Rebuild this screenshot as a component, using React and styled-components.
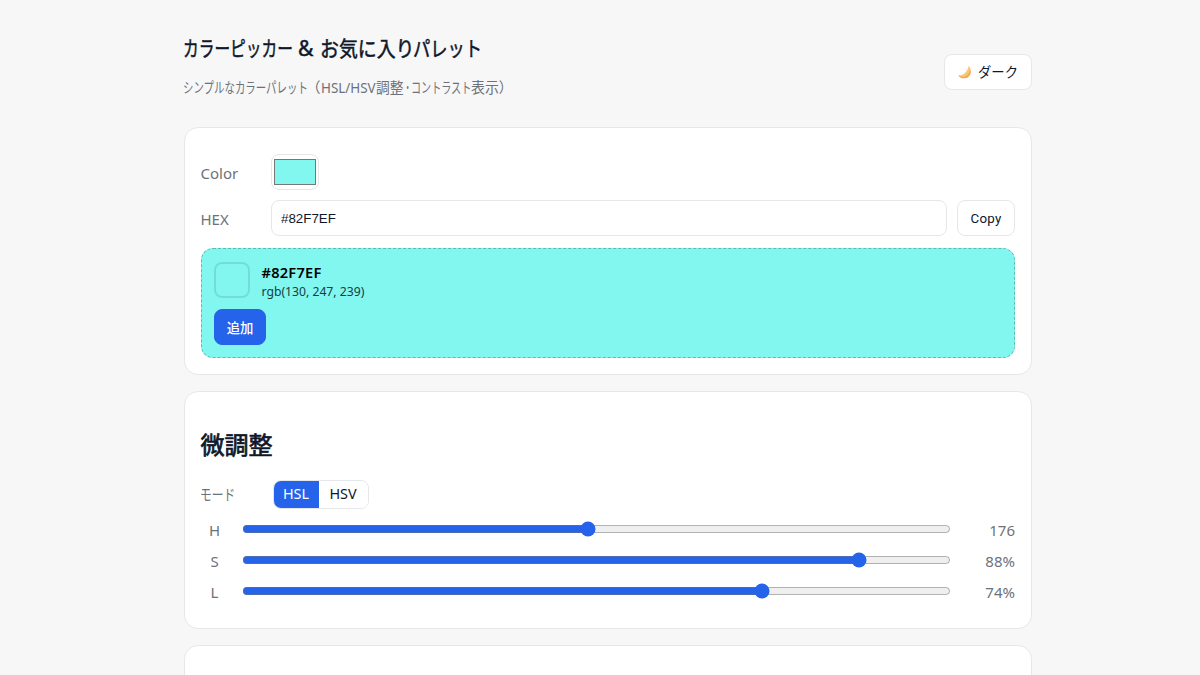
import React, { useState } from "react";
import styled, { createGlobalStyle } from "styled-components";

const Global = createGlobalStyle`
  * { box-sizing: border-box; }
  body {
    margin: 0;
    height: 675px;
    overflow: hidden;
    background: #f7f7f7;
    color: #0f172a;
    font-family: "Noto Sans", "Noto Sans CJK JP", sans-serif;
    font-size: 15px;
  }
`;

const Page = styled.main`
  width: 848px;
  height: 675px;
  overflow: hidden;
  margin-left: 184px;
`;
const Header = styled.header`
  height: 127px;
  padding-top: 32px;
  display: flex;
  justify-content: space-between;
`;
const Title = styled.h1`
  display: flex;
  margin: 0 0 0 -1px;
  height: 32px;
  line-height: 32px;
  font-size: 21px;
  font-weight: 400;
  -webkit-text-stroke: 0.5px #0f172a;
`;
const Subtitle = styled.p`
  display: flex;
  margin: 12px 0 0 -1px;
  height: 22px;
  line-height: 22px;
  font-size: 14.5px;
  color: #6c727c;
`;
const Narrow = styled.span`
  display: inline-block;
  flex: none;
  width: ${(p) => p.$w}px;
  transform: scaleX(${(p) => p.$scale || 1});
  transform-origin: 0 50%;
  white-space: pre;
`;
const Button = styled.button`
  height: 36px;
  width: ${(p) => p.$width}px;
  padding: 0;
  display: flex;
  align-items: center;
  justify-content: center;
  gap: 6px;
  border: 1px solid ${(p) => (p.$primary ? "#2563eb" : "#e5e7eb")};
  border-radius: 8px;
  background: ${(p) => (p.$primary ? "#2563eb" : "#fff")};
  color: ${(p) => (p.$primary ? "#fff" : "#0f172a")};
  font: ${(p) => (p.$primary ? 500 : 400)} 13.33px Roboto, "Noto Sans CJK JP", sans-serif;
  letter-spacing: ${(p) => p.$spacing || 0}px;
`;
const ThemeButton = styled(Button)`
  margin-top: 22px;
  padding-bottom: 1px;
`;
const Card = styled.section`
  height: ${(p) => p.$height}px;
  margin-bottom: 16px;
  padding: ${(p) => p.$top}px 16px 16px;
  background: #fff;
  border: 1px solid #e5e7eb;
  border-radius: 14px;
`;
const Row = styled.div`
  display: grid;
  grid-template-columns: 60px ${(p) => p.$cols};
  gap: 10px;
  align-items: center;
  margin-bottom: ${(p) => p.$after}px;
`;
const Label = styled.label`
  margin-left: -0.5px;
  padding-top: ${(p) => p.$shift ?? 2}px;
  height: ${(p) => 20 + (p.$shift ?? 2)}px;
  line-height: 20px;
  color: #6c727c;
  white-space: nowrap;
`;
const ModeLabel = styled(Label)`
  margin-left: -1px;
  margin-top: -2px;
`;
const ColorInput = styled.input`
  width: 48px;
  height: 36px;
  padding: 0;
  border: 1px solid #e5e7eb;
  border-radius: 8px;
  background: #fff;
`;
const HexInput = styled.input`
  min-width: 0;
  height: 36px;
  padding: 0 9px;
  border: 1px solid #e5e7eb;
  border-radius: 8px;
  background: #fff;
  color: #0f172a;
  font: 13.33px "Liberation Sans", sans-serif;
`;
const Preview = styled.div`
  height: 110px;
  padding: 13px 12px 12px;
  border: 1px dashed rgba(0, 0, 0, 0.25);
  border-radius: 12px;
  background: #82f7ef;
`;
const PreviewInfo = styled.div`
  display: flex;
  gap: 11.5px;
  height: 36px;
  margin-bottom: 11px;
`;
const Swatch = styled.div`
  width: 36px;
  height: 36px;
  border: 2px solid rgba(0, 0, 0, 0.1);
  border-radius: 8px;
`;
const HexName = styled.div`
  height: 20px;
  line-height: 20px;
  font-size: 14.6px;
  font-weight: 600;
  letter-spacing: 0.25px;
  color: #000;
`;
const RgbName = styled.div`
  line-height: 20px;
  font-size: 12.2px;
  color: #15403f;
`;
const Heading = styled.h2`
  margin: 0 0 17px -0.5px;
  height: 36px;
  line-height: 36px;
  font-size: 24px;
  font-weight: 400;
  -webkit-text-stroke: 0.7px #0f172a;
`;
const Segments = styled.div`
  display: flex;
  width: 96px;
  height: 29px;
  margin-left: 2px;
  overflow: hidden;
  border: 1px solid #e5e7eb;
  border-radius: 8px;
`;
const Segment = styled.button`
  width: ${(p) => p.$width}px;
  padding: 0 1px 2px 0;
  border: 0;
  background: ${(p) => (p.$active ? "#2563eb" : "#fff")};
  color: ${(p) => (p.$active ? "#fff" : "#0f172a")};
  font: 14.4px "Noto Sans", sans-serif;
`;
const SliderRow = styled.div`
  display: grid;
  grid-template-columns: 27px 1fr 51px;
  column-gap: 13.5px;
  height: 31px;
  color: #6c727c;
`;
const Channel = styled.span`
  text-align: center;
  line-height: 31px;
  padding-top: 1px;
`;
const Value = styled(Channel)`
  text-align: right;
`;
const Range = styled.input`
  width: 100%;
  height: 16px;
  margin: 7px 0 0;
  accent-color: #2563eb;
`;

const Moon = () => (
  <svg width="14" height="14" viewBox="0 0 14 14">
    <path d="M10.6.7c2.1 2 2.9 5 1.600 8.200-1.300 3.200-4.500 4.900-7.800 4.200C2.300 12.700 1 11.500.5 10c3.200.6 5.600-.4 7.500-3.300C9.500 5 10.400 3.200 10.600.7Z" fill="#fbc574" />
    <path d="M.5 10c1.200 1.500 3.400 2.300 5.400 1.900 3.300-.6 5.800-3.700 5.900-7.200 1.100 1.700 1.100 3.500.3 5-1.400 2.600-4.600 4.100-7.700 3.500C2.300 12.700 1 11.500.5 10Z" fill="#efa851" />
  </svg>
);

const sliders = [
  { name: "H", max: 360, start: 176, unit: "" },
  { name: "S", max: 100, start: 88, unit: "%" },
  { name: "L", max: 100, start: 74, unit: "%" },
];

function Slider({ name, max, start, unit }) {
  const [value, setValue] = useState(start);
  return (
    <SliderRow>
      <Channel>{name}</Channel>
      <Range type="range" min="0" max={max} value={value} onChange={(e) => setValue(e.target.value)} />
      <Value>{value}{unit}</Value>
    </SliderRow>
  );
}

export default function App() {
  const [mode, setMode] = useState("HSL");
  return (
    <>
      <Global />
      <Page>
        <Header>
          <div>
            <Title>
              <Narrow $w={115} $scale={0.748}>カラーピッカー</Narrow>
              <Narrow $w={22}>&amp;</Narrow>
              <Narrow $w={93} $scale={0.9}>お気に入り</Narrow>
              <Narrow $w={68} $scale={0.82}>パレット</Narrow>
            </Title>
            <Subtitle>
              <Narrow $w={123} $scale={0.72}>シンプルなカラーパレット</Narrow>
              <Narrow $w={15}>（</Narrow>
              <Narrow $w={55} $scale={0.925}>HSL/HSV</Narrow>
              <Narrow $w={28} $scale={0.95}>調整</Narrow>
              <Narrow $w={7} $scale={0.5}>・</Narrow>
              <Narrow $w={60} $scale={0.695}>コントラスト</Narrow>
              <Narrow $w={42} $scale={0.96}>表示）</Narrow>
            </Subtitle>
          </div>
          <ThemeButton $width={88}><Moon />ダーク</ThemeButton>
        </Header>

        <Card $height={248} $top={26}>
          <Row $cols="1fr" $after={10}>
            <Label>Color</Label>
            <ColorInput type="color" defaultValue="#82f7ef" />
          </Row>
          <Row $cols="1fr 58px" $after={12}>
            <Label>HEX</Label>
            <HexInput defaultValue="#82F7EF" />
            <Button $width={58} $spacing={0.2}>Copy</Button>
          </Row>
          <Preview>
            <PreviewInfo>
              <Swatch />
              <div>
                <HexName>#82F7EF</HexName>
                <RgbName>rgb(130, 247, 239)</RgbName>
              </div>
            </PreviewInfo>
            <Button $primary $width={52}>追加</Button>
          </Preview>
        </Card>

        <Card $height={238} $top={35}>
          <Heading>微調整</Heading>
          <Row $cols="1fr" $after={5}>
            <ModeLabel $shift={0}><Narrow $w={36} $scale={0.78}>モード</Narrow></ModeLabel>
            <Segments>
              <Segment $width={45} $active={mode === "HSL"} onClick={() => setMode("HSL")}>HSL</Segment>
              <Segment $width={49} $active={mode === "HSV"} onClick={() => setMode("HSV")}>HSV</Segment>
            </Segments>
          </Row>
          {sliders.map((s) => <Slider key={s.name} {...s} />)}
        </Card>

        <Card $height={238} $top={35} />
      </Page>
    </>
  );
}
